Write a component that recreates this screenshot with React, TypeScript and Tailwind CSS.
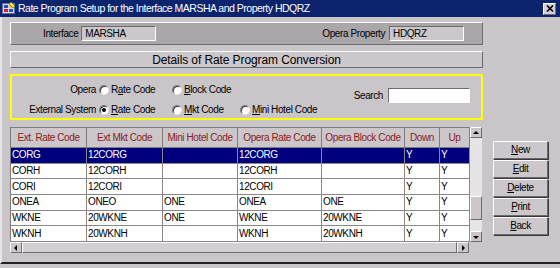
import React from "react";

type Row = string[];

const headers = ["Ext. Rate Code", "Ext Mkt Code", "Mini Hotel Code", "Opera Rate Code", "Opera Block Code", "Down", "Up"];

const rows: Row[] = [
  ["CORG", "12CORG", "", "12CORG", "", "Y", "Y"],
  ["CORH", "12CORH", "", "12CORH", "", "Y", "Y"],
  ["CORI", "12CORI", "", "12CORI", "", "Y", "Y"],
  ["ONEA", "ONEO", "ONE", "ONEA", "ONE", "Y", "Y"],
  ["WKNE", "20WKNE", "ONE", "WKNE", "20WKNE", "Y", "Y"],
  ["WKNH", "20WKNH", "", "WKNH", "20WKNH", "Y", "Y"],
];

const buttons = [
  { label: "New", k: 0 },
  { label: "Edit", k: 0 },
  { label: "Delete", k: 0 },
  { label: "Print", k: 0 },
  { label: "Back", k: 0 },
];

// text with the access key letter underlined
function Key({ text, k }: { text: string; k: number }) {
  return (
    <span className="whitespace-nowrap">
      {text.slice(0, k)}
      <span className="underline underline-offset-1">{text[k]}</span>
      {text.slice(k + 1)}
    </span>
  );
}

function Radio({ checked }: { checked?: boolean }) {
  return (
    <span className="w-[10px] h-[10px] rounded-full bg-white border border-t-[#7a767a] border-l-[#7a767a] border-b-[#e8e6e8] border-r-[#e8e6e8] shadow-[inset_1px_1px_0_#404040] flex items-center justify-center shrink-0">
      {checked && <span className="w-[4px] h-[4px] rounded-full bg-black" />}
    </span>
  );
}

function Option({ label, k, checked, w }: { label: string; k: number; checked?: boolean; w: string }) {
  return (
    <div className={`flex items-center ${w}`}>
      <Radio checked={checked} />
      <span className="ml-[2px]">
        <Key text={label} k={k} />
      </span>
    </div>
  );
}

function AppIcon() {
  return (
    <svg width="14" height="13" viewBox="0 0 14 13">
      <rect x="0.5" y="1.5" width="12" height="10" fill="#d8d8e8" stroke="#6070a0" />
      <rect x="2" y="3" width="4" height="3" fill="#2050c0" />
      <rect x="7" y="3" width="4" height="3" fill="#e0d020" />
      <rect x="2" y="7" width="4" height="3" fill="#d02020" />
      <rect x="7" y="7" width="4" height="3" fill="#2050c0" />
      <path d="M9 0 L13 4 L11 6 L7 2 Z" fill="#f0e040" stroke="#806000" strokeWidth="0.6" />
    </svg>
  );
}

function Arrow({ dir }: { dir: "up" | "down" | "left" | "right" }) {
  const d = {
    up: "M2 6 L5 3 L8 6 Z",
    down: "M2 4 L5 7 L8 4 Z",
    left: "M6 2 L3 5 L6 8 Z",
    right: "M4 2 L7 5 L4 8 Z",
  }[dir];
  return (
    <svg width="10" height="10" viewBox="0 0 10 10">
      <path d={d} fill="#000" />
    </svg>
  );
}

const raised = "border border-t-white border-l-white border-b-[#6e6a6e] border-r-[#6e6a6e]";
const sunken = "border border-t-[#6e6a6e] border-l-[#6e6a6e] border-b-white border-r-white";
const cols = "grid grid-cols-[76px_76px_75px_84px_83px_35px_30px]";

export default function App() {
  return (
    <div className="w-[560px] h-[268px] bg-[#c9c5c9] font-['Liberation_Sans',Arial,sans-serif] text-[10px] tracking-[-0.4px] leading-none text-black flex flex-col overflow-hidden whitespace-nowrap">
      {/* title bar */}
      <div className="h-[17px] shrink-0 bg-[#0c246e] flex items-center pl-[2px] pr-[4px]">
        <AppIcon />
        <span className="ml-[2px] text-white text-[10.5px] tracking-[-0.5px]">Rate Program Setup for the Interface MARSHA and Property HDQRZ</span>
        <div className={`ml-auto w-[13px] h-[12px] bg-[#d4d0d4] ${raised} flex items-center justify-center`}>
          <svg width="8" height="7" viewBox="0 0 8 7">
            <path d="M1 0.5 L7 6.5 M7 0.5 L1 6.5" stroke="#000" strokeWidth="1.6" />
          </svg>
        </div>
      </div>

      <div className="flex-1 flex flex-col border-l-[2px] border-l-[#e6e4e6] border-b-[2px] border-b-[#222] mb-[4px] pl-[8px] pt-[5px]">
        {/* interface / property */}
        <div className={`w-[473px] h-[23px] bg-[#aaa6aa] ${raised} flex items-center`}>
          <span className="ml-[32px]">Interface</span>
          <div className={`ml-[3px] w-[75px] h-[15px] bg-[#cbc7cb] ${sunken} flex items-center pl-[3px]`}>MARSHA</div>
          <span className="ml-[166px]">Opera Property</span>
          <div className={`ml-[4px] w-[75px] h-[15px] bg-[#cbc7cb] ${sunken} flex items-center pl-[3px]`}>HDQRZ</div>
        </div>

        {/* details bar */}
        <div className={`mt-[6px] w-[473px] h-[17px] bg-[#cbc7cb] ${raised} flex items-center justify-center text-[12px] tracking-[-0.1px]`}>
          Details of Rate Program Conversion
        </div>

        {/* filter box */}
        <div className="mt-[6px] w-[473px] h-[46px] border-[2px] border-[#ffff00] flex">
          <div className="flex flex-col gap-[6px] pt-[7px]">
            <div className="flex items-center h-[14px]">
              <span className="w-[87px] text-right pr-[3px]">Opera</span>
              <Option label="Rate Code" k={1} w="w-[73px]" />
              <Option label="Block Code" k={0} w="w-[68px]" />
            </div>
            <div className="flex items-center h-[14px]">
              <span className="w-[87px] text-right pr-[3px]">External System</span>
              <Option label="Rate Code" k={0} checked w="w-[73px]" />
              <Option label="Mkt Code" k={0} w="w-[68px]" />
              <Option label="Mini Hotel Code" k={0} w="w-[90px]" />
            </div>
          </div>
          <div className="ml-auto mr-[11px] mt-[12px] flex items-center h-[15px]">
            <span className="mr-[5px]">Search</span>
            <div className={`w-[82px] h-[15px] bg-white ${sunken}`} />
          </div>
        </div>

        {/* table + buttons */}
        <div className="mt-[7px] flex">
          <div className="flex flex-col">
            <div className="flex">
              <div className="flex flex-col border-l border-t border-[#7e7a7e]">
                <div className={`${cols} h-[20px]`}>
                  {headers.map((h) => (
                    <div key={h} className="bg-[#cbc7cb] border-r border-b border-[#7e7a7e] flex items-center justify-center text-[#8a1c1c]">
                      {h}
                    </div>
                  ))}
                </div>
                <div className="grid grid-rows-6 h-[94px]">
                  {rows.map((r, i) => (
                    <div key={i} className={`${cols} ${i === 0 ? "bg-[#00007e] text-white" : "bg-white"}`}>
                      {r.map((c, j) => (
                        <div key={j} className="border-r border-b border-[#8a868a] flex items-center pl-[1px]">
                          {c}
                        </div>
                      ))}
                    </div>
                  ))}
                </div>
              </div>
              {/* vertical scrollbar */}
              <div className="w-[12px] flex flex-col">
                <div className={`h-[11px] bg-[#cbc7cb] ${raised} flex items-center justify-center`}>
                  <Arrow dir="up" />
                </div>
                <div className="h-[58px] bg-[#e6e4e6]" />
                <div className={`h-[24px] bg-[#cbc7cb] ${raised}`} />
                <div className="flex-1 bg-[#e6e4e6]" />
                <div className={`h-[11px] bg-[#cbc7cb] ${raised} flex items-center justify-center`}>
                  <Arrow dir="down" />
                </div>
              </div>
            </div>
            {/* horizontal scrollbar */}
            <div className="flex h-[11px]">
              <div className={`w-[12px] bg-[#cbc7cb] ${raised} flex items-center justify-center`}>
                <Arrow dir="left" />
              </div>
              <div className={`w-[435px] bg-[#d3cfd3] ${raised}`} />
              <div className={`w-[12px] bg-[#cbc7cb] ${raised} flex items-center justify-center`}>
                <Arrow dir="right" />
              </div>
              <div className="w-[12px] bg-[#cbc7cb]" />
            </div>
          </div>

          <div className="ml-[11px] mt-[14px] flex flex-col gap-[1px]">
            {buttons.map((b) => (
              <button key={b.label} className={`w-[55px] h-[18px] bg-[#cbc7cb] ${raised} shadow-[1px_1px_0_#3a363a] flex items-center justify-center`}>
                <Key text={b.label} k={b.k} />
              </button>
            ))}
          </div>
        </div>
      </div>
    </div>
  );
}
